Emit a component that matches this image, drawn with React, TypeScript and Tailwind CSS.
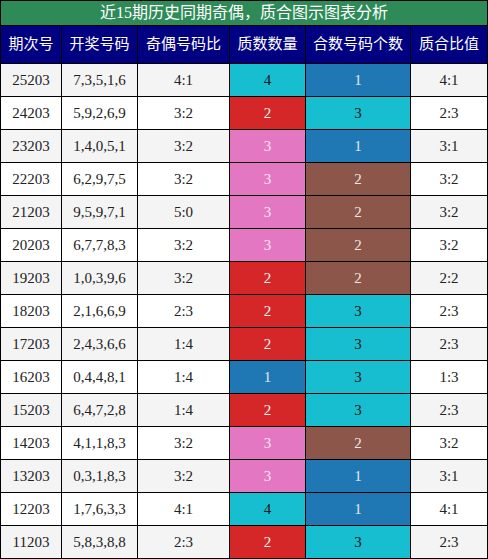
const rows: [string, string, string, number, number, string][] = [
  ['25203', '7,3,5,1,6', '4:1', 4, 1, '4:1'],
  ['24203', '5,9,2,6,9', '3:2', 2, 3, '2:3'],
  ['23203', '1,4,0,5,1', '3:2', 3, 1, '3:1'],
  ['22203', '6,2,9,7,5', '3:2', 3, 2, '3:2'],
  ['21203', '9,5,9,7,1', '5:0', 3, 2, '3:2'],
  ['20203', '6,7,7,8,3', '3:2', 3, 2, '3:2'],
  ['19203', '1,0,3,9,6', '3:2', 2, 2, '2:2'],
  ['18203', '2,1,6,6,9', '2:3', 2, 3, '2:3'],
  ['17203', '2,4,3,6,6', '1:4', 2, 3, '2:3'],
  ['16203', '0,4,4,8,1', '1:4', 1, 3, '1:3'],
  ['15203', '6,4,7,2,8', '1:4', 2, 3, '2:3'],
  ['14203', '4,1,1,8,3', '3:2', 3, 2, '3:2'],
  ['13203', '0,3,1,8,3', '3:2', 3, 1, '3:1'],
  ['12203', '1,7,6,3,3', '4:1', 4, 1, '4:1'],
  ['11203', '5,8,3,8,8', '2:3', 2, 3, '2:3'],
]

// 质数数量 colours
const primeColor: Record<number, string> = {
  1: 'bg-[#1f77b4] text-[#e8e8e8]',
  2: 'bg-[#d62728] text-[#f4f4f4]',
  3: 'bg-[#e377c2] text-[#fbe4f3]',
  4: 'bg-[#17becf] text-[#111]',
}

// 合数号码个数 colours
const compColor: Record<number, string> = {
  1: 'bg-[#1f77b4] text-[#e8e8e8]',
  2: 'bg-[#8c564b] text-[#f0e6e4]',
  3: 'bg-[#17becf] text-[#111]',
}

const headers = ['期次号', '开奖号码', '奇偶号码比', '质数数量', '合数号码个数', '质合比值']

export default function App() {
  return (
    <div
      className="w-[488px] h-[559px] bg-black p-px"
      style={{ fontFamily: '"Liberation Serif", "Noto Sans CJK SC", serif' }}
    >
      <div className="grid grid-cols-[60px_75px_91px_75px_104px_76px] grid-rows-[24px_37px] auto-rows-[32px] gap-px">
        <div className="col-span-6 bg-[#2e8b57] text-white text-[16px] flex items-center justify-center">
          近15期历史同期奇偶，质合图示图表分析
        </div>
        {headers.map((h) => (
          <div key={h} className="bg-[#000080] text-white text-[15px] flex items-center justify-center">
            {h}
          </div>
        ))}
        {rows.map((r, i) => {
          const bg = i % 2 === 0 ? 'bg-[#f4f4f4]' : 'bg-white'
          const cell = 'flex items-center justify-center text-[15px]'
          return [
            <div key={i + 'a'} className={`${cell} ${bg} text-[#222]`}>{r[0]}</div>,
            <div key={i + 'b'} className={`${cell} ${bg} text-[#222]`}>{r[1]}</div>,
            <div key={i + 'c'} className={`${cell} ${bg} text-[#222]`}>{r[2]}</div>,
            <div key={i + 'd'} className={`${cell} ${primeColor[r[3]]}`}>{r[3]}</div>,
            <div key={i + 'e'} className={`${cell} ${compColor[r[4]]}`}>{r[4]}</div>,
            <div key={i + 'f'} className={`${cell} ${bg} text-[#222]`}>{r[5]}</div>,
          ]
        })}
      </div>
    </div>
  )
}
